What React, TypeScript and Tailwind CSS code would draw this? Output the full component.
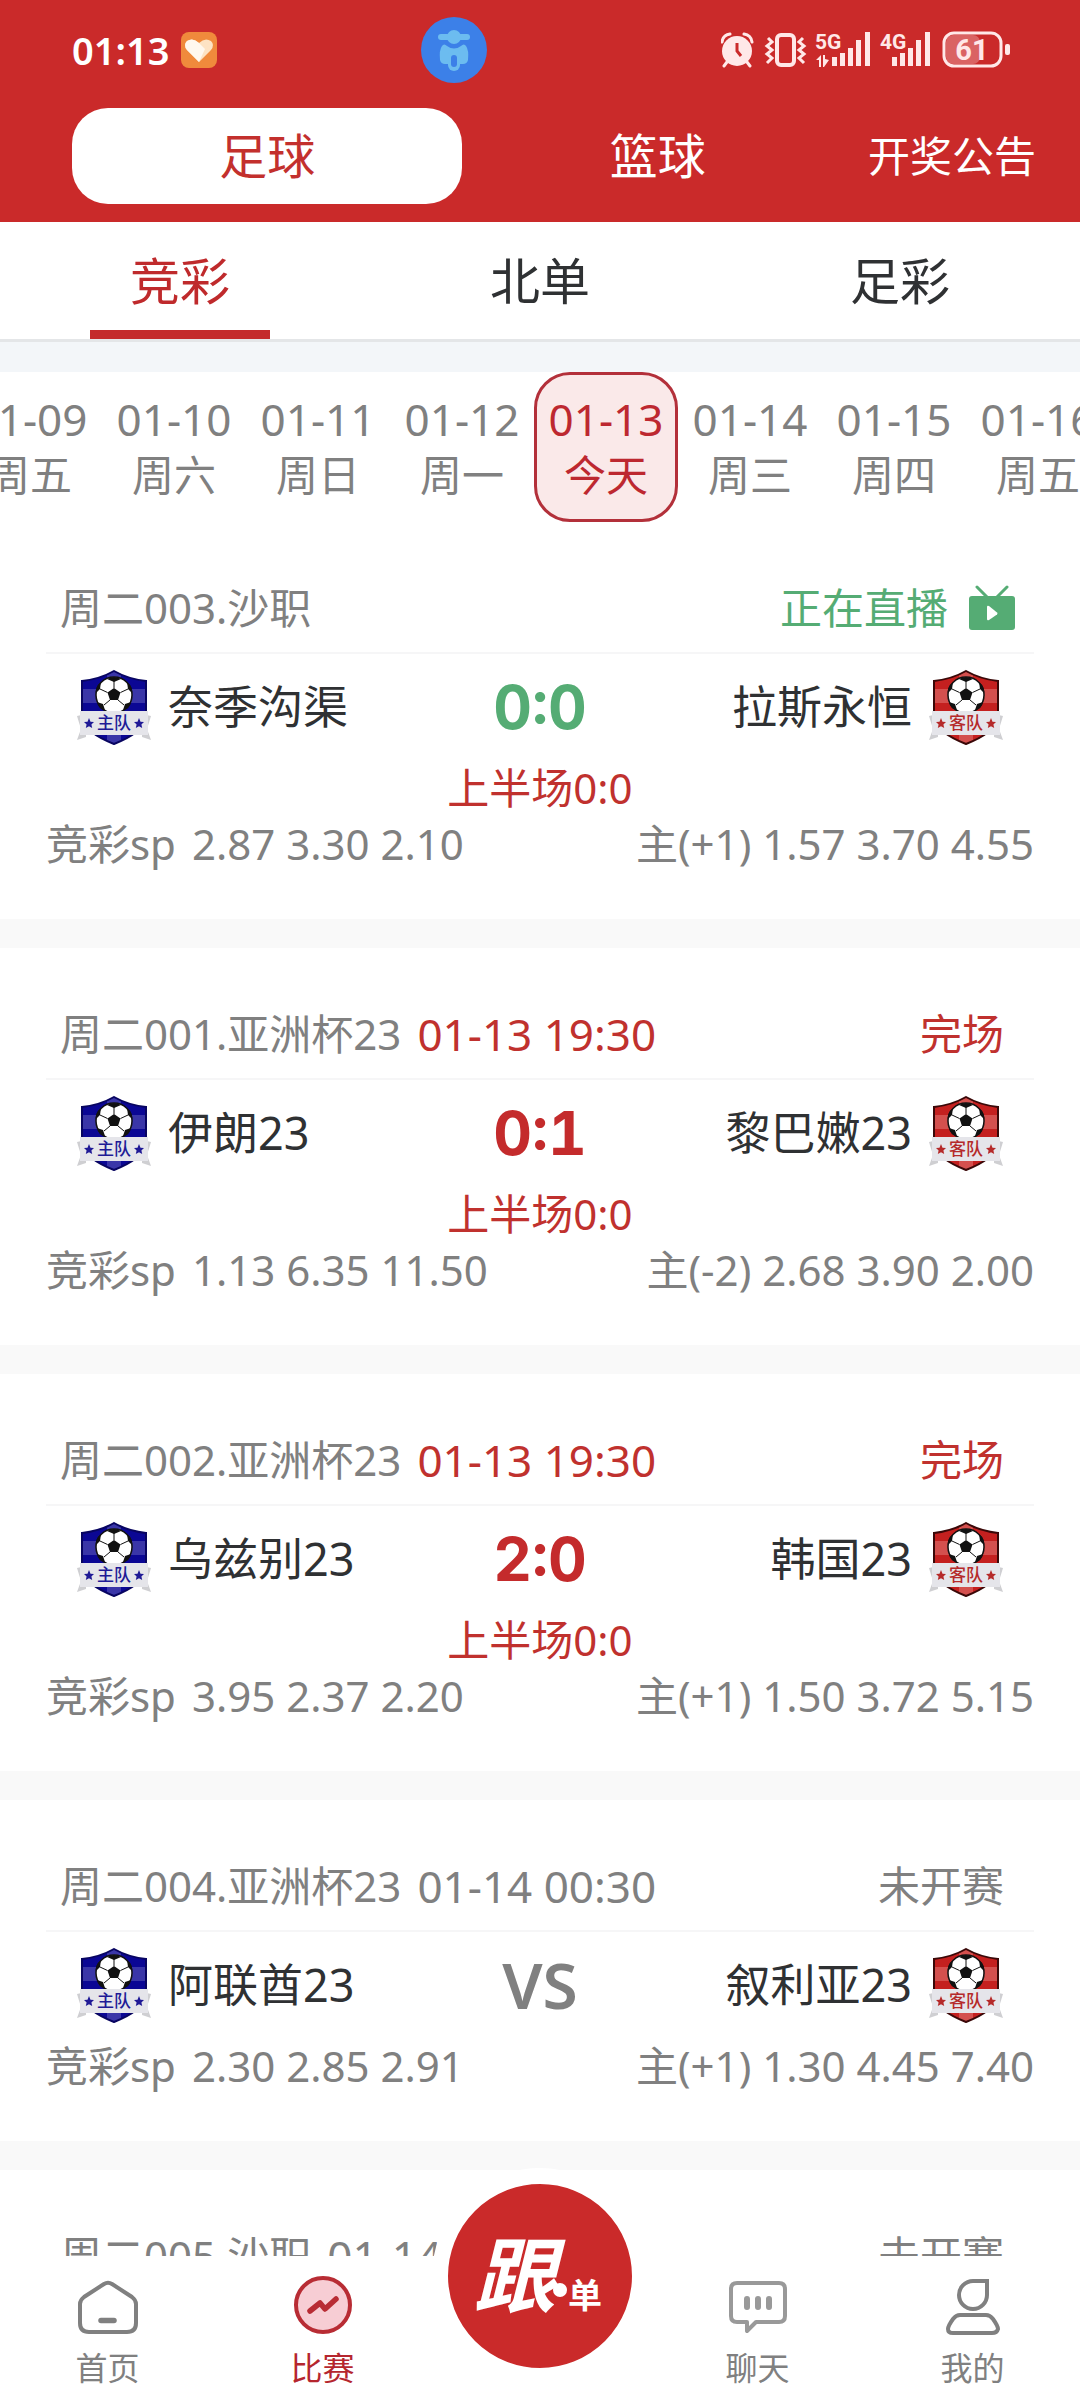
import React, {useState} from 'react';

/* ======================= 类型定义 ======================= */

type MatchStatus = 'live' | 'finished' | 'pending';

interface Match {
  id: string;
  title: string;
  time?: string;
  status: MatchStatus;
  home?: string;
  away?: string;
  score?: string;
  half?: string;
  sp?: string;
  handicap?: string;
}

const DATES = [
  {date: '01-09', week: '周五'},
  {date: '01-10', week: '周六'},
  {date: '01-11', week: '周日'},
  {date: '01-12', week: '周一'},
  {date: '01-13', week: '今天'},
  {date: '01-14', week: '周三'},
  {date: '01-15', week: '周四'},
  {date: '01-16', week: '周五'},
];

const MATCHES: Match[] = [
  {id: '003', title: '周二003.沙职', status: 'live', home: '奈季沟渠', away: '拉斯永恒', score: '0:0', half: '上半场0:0', sp: '2.87 3.30 2.10', handicap: '主(+1) 1.57 3.70 4.55'},
  {id: '001', title: '周二001.亚洲杯23', time: '01-13 19:30', status: 'finished', home: '伊朗23', away: '黎巴嫩23', score: '0:1', half: '上半场0:0', sp: '1.13 6.35 11.50', handicap: '主(-2) 2.68 3.90 2.00'},
  {id: '002', title: '周二002.亚洲杯23', time: '01-13 19:30', status: 'finished', home: '乌兹别23', away: '韩国23', score: '2:0', half: '上半场0:0', sp: '3.95 2.37 2.20', handicap: '主(+1) 1.50 3.72 5.15'},
  {id: '004', title: '周二004.亚洲杯23', time: '01-14 00:30', status: 'pending', home: '阿联酋23', away: '叙利亚23', sp: '2.30 2.85 2.91', handicap: '主(+1) 1.30 4.45 7.40'},
  {id: '005', title: '周二005.沙职', time: '01-14', status: 'pending'},
];

const redText = 'text-[#c0312e]';

/* ======================= 主组件 ======================= */

export default function App() {
  const [sport, setSport] = useState('足球');
  const [tab, setTab] = useState('竞彩');
  const [day, setDay] = useState('01-13');

  return (
    <div className="flex h-screen flex-col overflow-hidden bg-white font-['Noto_Sans','Noto_Sans_CJK_SC',sans-serif] text-[#808080]">
      <header className="shrink-0 bg-[#ca2a2a] text-white">
        <StatusBar/>
        <div className="flex items-center justify-between pt-2 pr-11 pb-[18px] pl-[72px]">
          <div className="flex w-[81%] text-5xl">
            {['足球', '篮球'].map(name => (
              <button
                key={name}
                onClick={() => setSport(name)}
                className={`h-24 flex-1 rounded-[36px] ${sport === name ? 'bg-white text-[#c3302d]' : ''}`}
              >
                {name}
              </button>
            ))}
          </div>
          <a href="#notice" className="shrink-0 text-[42px] leading-[60px]">开奖公告</a>
        </div>
      </header>

      {/* 玩法切换 */}
      <nav className="flex shrink-0 border-b-3 border-[#e4e6e8]">
        {['竞彩', '北单', '足彩'].map(name => (
          <button
            key={name}
            onClick={() => setTab(name)}
            className={`flex flex-1 flex-col items-center text-[50px] ${tab === name ? 'text-[#bf2a2c]' : 'text-[#2f3133]'}`}
          >
            <span className="h-[108px] leading-[118px]">{name}</span>
            <span className={`h-[9px] w-1/2 ${tab === name ? 'bg-[#c42b2c]' : ''}`}/>
          </button>
        ))}
      </nav>
      <div className="h-[30px] shrink-0 bg-[#f3f6f9]"/>

      {/* 日期 */}
      <div className="flex shrink-0 justify-center overflow-hidden">
        <div className="-ml-3 flex">
          {DATES.map(({date, week}) => (
            <button
              key={date}
              onClick={() => setDay(date)}
              className={`flex h-[150px] w-36 shrink-0 flex-col items-center justify-center rounded-[36px] border-3 leading-[56px] ${
                day === date ? 'border-[#b3303a] bg-[#fae9e9] text-[#bd2830]' : 'border-transparent'
              }`}
            >
              <span className="text-[44px]">{date}</span>
              <span className="text-[42px]">{week}</span>
            </button>
          ))}
        </div>
      </div>

      <main className="min-h-0 flex-1 overflow-hidden">
        <div className="divide-y-[29px] divide-[#f9f9f9]">
          {MATCHES.map(match => <MatchCard key={match.id} match={match}/>)}
        </div>
      </main>

      <BottomNav/>
    </div>
  );
}

/* ======================= 子组件 ======================= */

function MatchCard({match}: { match: Match }) {
  return (
    <article className="px-[46px] pt-[58px] pb-[47px] text-[42px] leading-[56px]">
      <div className="flex justify-between border-b-2 border-[#f6f6f7] px-[14px] pb-4">
        <div className="flex gap-4">
          <span>{match.title}</span>
          {match.time && (
            <span className={`text-[44px] ${match.status === 'finished' ? redText : ''}`}>{match.time}</span>
          )}
        </div>
        {match.status === 'live' ? (
          <span className="flex items-center gap-5 pr-1 text-[#55ac74]">
            正在直播
            <LiveIcon/>
          </span>
        ) : (
          <span className={`pr-4 ${match.status === 'finished' ? redText : ''}`}>
            {match.status === 'finished' ? '完场' : '未开赛'}
          </span>
        )}
      </div>
      {match.home && <MatchBody match={match}/>}
    </article>
  );
}

function MatchBody({match}: { match: Match }) {
  return (
    <>
      <div className="grid h-[106px] grid-cols-[1fr_auto_1fr] items-center px-[30px] text-[45px] text-[#2f3133]">
        <div className="flex items-center gap-4">
          <TeamBadge label="主队" side="home"/>
          {match.home}
        </div>
        {match.score ? (
          <strong className={`font-['Inter',sans-serif] text-[60px] font-bold tabular-nums ${match.status === 'live' ? 'text-[#55ac74]' : 'text-[#c42b2c]'}`}>
            {match.score}
          </strong>
        ) : (
          <strong className="text-[64px] font-semibold text-[#808080]">VS</strong>
        )}
        <div className="flex items-center justify-end gap-4">
          {match.away}
          <TeamBadge label="客队" side="away"/>
        </div>
      </div>

      {match.half && <p className={`text-center ${redText}`}>{match.half}</p>}

      <div className="flex justify-between">
        <span className="flex gap-4"><span>竞彩sp</span><span>{match.sp}</span></span>
        <span>{match.handicap}</span>
      </div>
    </>
  );
}

function TeamBadge({label, side}: { label: string; side: 'home' | 'away' }) {
  const home = side === 'home';
  const base = home ? '#0b0794' : '#c4201f';
  const light = home ? '#3a36a8' : '#d4504e';
  const edge = home ? '#080560' : '#3a0808';
  const ink = home ? '#201a96' : '#b52a2a';

  return (
    <svg viewBox="0 0 76 76" className="size-[76px] shrink-0">
      <path d="M6 12 Q24 10 38 2 Q52 10 70 12 V50 Q66 64 38 75 Q10 64 6 50Z" fill={base}/>
      <path d="M31 5 L38 2 L45 5 V72 L38 75 L31 72Z M6 20 H70 V34 H6Z" fill={light}/>
      <path d="M6 12 Q24 10 38 2 Q52 10 70 12 V50 Q66 64 38 75 Q10 64 6 50Z" fill="none" stroke={edge} strokeWidth="2"/>
      <circle cx="38" cy="26" r="18" fill="#fff" stroke="#111" strokeWidth="1.5"/>
      <path d="M38 19 L44.500 23.500 L42 31 H34 L31.500 23.500Z M31 10 L38 13 L45 10 Q38 6 31 10Z M20 24 L24 20 L25 13 Q18 18 20 28Z M56 24 L52 20 L51 13 Q58 18 56 28Z M21 33 L27 35 L29 41 Q22 40 21 33Z M55 33 L49 35 L47 41 Q54 40 55 33Z" fill="#111"/>
      <path d="M38 12 V19 M44.500 23.500 L52 20 M42 31 L48 36 M34 31 L28 36 M31.500 23.500 L24 20" stroke="#111" strokeWidth="1"/>
      <path d="M1 47 L10 45 V68 L1 71 L5 60Z M75 47 L66 45 V68 L75 71 L71 60Z" fill="#cfcfd2"/>
      <path d="M4 42 H72 V66 H4Z" fill="#e5e5ea"/>
      <path d="M13 49 L14.500 52.700 L18 53 L15.400 55.500 L16.200 59 L13 57.200 L9.800 59 L10.600 55.500 L8 53 L11.500 52.700Z" fill={ink}/>
      <path d="M63 49 L64.500 52.700 L68 53 L65.400 55.500 L66.200 59 L63 57.200 L59.800 59 L60.600 55.500 L58 53 L61.500 52.700Z" fill={ink}/>
      <text x="38" y="60" textAnchor="middle" fontSize="17" fontWeight="500" fill={ink}>{label}</text>
    </svg>
  );
}

function LiveIcon() {
  return (
    <svg viewBox="0 0 48 46" className="h-[46px] w-12">
      <path d="M9 2 L19 12 M39 2 L29 12" stroke="currentColor" strokeWidth="3" strokeLinecap="round"/>
      <rect x="1" y="11" width="46" height="34" rx="3" fill="currentColor"/>
      <path d="M19 22 V34 Q19 36 21 35 L29 29.500 Q30 28.500 29 27.500 L21 21 Q19 20 19 22Z" fill="#fff"/>
    </svg>
  );
}

function StatusBar() {
  return (
    <div className="flex h-[100px] items-center pr-[70px] pl-[72px]">
      <span className="text-[38px] leading-none font-semibold">01:13</span>
      <svg viewBox="0 0 36 36" className="ml-3 size-9">
        <rect width="36" height="36" rx="8" fill="#f08a3c"/>
        <path d="M18 30 L6 18 Q2 13 6 9 Q12 5 18 11 Q24 5 30 9 Q34 13 30 18Z" fill="#fde3c4"/>
        <path d="M18 30 L6 18 Q2 13 6 9 Q12 5 18 11 L24 17Z" fill="#fff8ee"/>
      </svg>
      <svg viewBox="0 0 66 66" className="ml-[204px] size-[66px]">
        <circle cx="33" cy="33" r="33" fill="#3c80e8"/>
        <g fill="#6cbcf0">
          <rect x="17" y="17" width="32" height="6" rx="3"/>
          <circle cx="33" cy="20" r="7"/>
          <path d="M21 29 Q23 26 26 29 Q33 34 40 29 Q43 26 45 29 Q48 33 47 43 Q46 47 42 47 H24 Q20 47 19 43 Q18 33 21 29Z"/>
          <rect x="27" y="32" width="12" height="22" rx="6"/>
        </g>
        <rect x="30" y="38" width="6" height="12" rx="3" fill="#3c80e8"/>
      </svg>

      <div className="ml-auto flex items-center text-[#ffe8e8]">
        <svg viewBox="0 0 289 38" className="h-[38px] w-[289px]" fill="currentColor">
          {/* 闹钟 */}
          <circle cx="16" cy="20" r="15"/>
          <path d="M1 11 Q2 4 9 3 M31 11 Q30 4 23 3 M6 31 L3 35 M26 31 L29 35" fill="none" stroke="currentColor" strokeWidth="3" strokeLinecap="round"/>
          <path d="M16 12 V20 L20 25" fill="none" stroke="#ca2a2a" strokeWidth="3"/>
          {/* 振动 */}
          <g fill="none" stroke="currentColor" strokeWidth="4">
            <rect x="56" y="4" width="17" height="30" rx="4"/>
            <path d="M47 7 L51 11 L46 15 L51 19 L46 23 L51 27 L46 32 M82 7 L78 11 L83 15 L78 19 L83 23 L78 27 L83 32" strokeWidth="3"/>
          </g>
          {/* 信号 */}
          <text x="94" y="18" fontSize="21" fontWeight="700" fontFamily="Roboto, sans-serif">5G</text>
          <path d="M95 29 L100 24 V36 H98 V29Z M102 24 H104 V28 L108 29 L103 36 H102Z"/>
          <path d="M111 26h5v9h-5z M119 22h5v13h-5z M127 17h5v18h-5z M135 9h5v26h-5z M144 1h5v34h-5z"/>
          <text x="159" y="18" fontSize="21" fontWeight="700" fontFamily="Roboto, sans-serif">4G</text>
          <path d="M171 26h5v9h-5z M179 22h5v13h-5z M187 17h5v18h-5z M195 9h5v26h-5z M204 1h5v34h-5z"/>
          {/* 电量 */}
          <rect x="225" y="4" width="34" height="29" rx="7" opacity=".3"/>
          <rect x="223" y="2" width="57" height="33" rx="10" fill="none" stroke="currentColor" strokeWidth="3"/>
          <rect x="284" y="13" width="5" height="11" rx="2"/>
          <text x="251" y="29" textAnchor="middle" fontSize="29" fontWeight="700" fontFamily="Roboto, sans-serif">61</text>
        </svg>
      </div>
    </div>
  );
}

function BottomNav() {
  const item = 'flex flex-1 flex-col items-center gap-2 text-[32px] leading-[48px]';
  const icon = 'size-[60px]';

  return (
    <nav className="relative z-10 flex h-36 shrink-0 bg-white pt-5">
      <a href="#home" className={item}>
        <svg viewBox="0 0 60 60" className={icon} fill="none" stroke="currentColor" strokeWidth="4">
          <path d="M26 8 Q30 5.500 34 8 L54 21 Q58 24 58 28 V47 Q58 56 49 56 H11 Q2 56 2 47 V28 Q2 24 6 21Z"/>
          <path d="M23 44.500 H36" strokeWidth="5.500" strokeLinecap="round"/>
        </svg>
        首页
      </a>
      <a href="#match" className={`${item} text-[#b5262e]`}>
        <svg viewBox="0 0 60 60" className={icon} fill="none" stroke="#b82c34">
          <circle cx="30" cy="29" r="27" fill="#f7cdd4" strokeWidth="4"/>
          <path d="M17 35 L27 27 L32 33 L43 23" strokeWidth="5.500" strokeLinecap="round" strokeLinejoin="round"/>
        </svg>
        比赛
      </a>
      <div className="w-[220px]">
        {/* 凸起的跟单按钮 */}
        <button className="absolute -top-[88px] left-1/2 size-[216px] -translate-x-1/2 rounded-full border-16 border-white bg-[#ca2a2a] text-white">
          <svg viewBox="0 0 184 184" className="size-full" fill="currentColor">
            <text x="26" y="122" fontSize="82" fontWeight="700" fontStyle="italic">跟</text>
            <circle cx="112" cy="106" r="7"/>
            <text x="120" y="124" fontSize="34" fontWeight="700">单</text>
          </svg>
        </button>
      </div>
      <a href="#chat" className={item}>
        <svg viewBox="0 0 60 60" className={`${icon} text-[#999]`} fill="none" stroke="currentColor" strokeWidth="4">
          <path d="M9 7 H51 Q57 7 57 13 V40 Q57 46 51 46 H28 L19 55 V46 H9 Q3 46 3 40 V13 Q3 7 9 7Z" strokeLinejoin="round"/>
          <path d="M19 23 V31 M30 23 V31 M41 23 V31" strokeWidth="6" strokeLinecap="round"/>
        </svg>
        聊天
      </a>
      <a href="#mine" className={item}>
        <svg viewBox="0 0 60 60" className={icon} fill="none" stroke="currentColor" strokeWidth="4">
          <path d="M30 5 H44 V19 A14 14 0 1 1 30 5Z"/>
          <path d="M17 39 H43 Q47 39 50 43 Q55 50 55 53 Q54 57 49 57 H10 Q5 57 5 53 Q5 50 10 43 Q13 39 17 39Z"/>
        </svg>
        我的
      </a>
    </nav>
  );
}
